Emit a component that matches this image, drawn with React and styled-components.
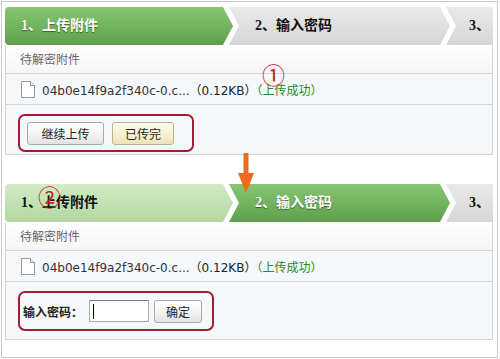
import React from "react";
import styled, { createGlobalStyle } from "styled-components";

const GlobalStyle = createGlobalStyle`
  html, body {
    margin: 0;
    padding: 0;
    background: #fff;
  }
  body {
    font-family: "Noto Sans CJK SC", "DejaVu Sans", sans-serif;
  }
`;

const stepColors = {
  active: {
    bg: "linear-gradient(to bottom, #88c574 0%, #72b45f 50%, #5f9f4c 100%)",
    color: "#fff",
    shadow: "0 1px 1px rgba(0, 0, 0, 0.45)",
  },
  done: {
    bg: "linear-gradient(to bottom, #d3ebc6 0%, #c2e1b2 50%, #b2d79f 100%)",
    color: "#111",
    shadow: "none",
  },
  idle: {
    bg: "linear-gradient(to bottom, #e9e9e9 0%, #dedede 60%, #d6d6d6 100%)",
    color: "#111",
    shadow: "none",
  },
};

const shapes = {
  first: "polygon(0 0, calc(100% - 10px) 0, 100% 50%, calc(100% - 10px) 100%, 0 100%)",
  middle:
    "polygon(0 0, calc(100% - 10px) 0, 100% 50%, calc(100% - 10px) 100%, 0 100%, 10px 50%)",
  last: "polygon(0 0, 100% 0, 100% 100%, 0 100%, 10px 50%)",
};

const Frame = styled.div`
  position: relative;
  box-sizing: border-box;
  width: 497px;
  height: 357px;
  margin: 1px 0 0 1px;
  border: 1px solid #c9c9c9;
  padding: 5px 4px 0 3px;
  background: #fff;
`;

const Panel = styled.div`
  width: 488px;
  margin-bottom: ${(p) => p.$gap || 0}px;
`;

const StepBar = styled.div`
  display: flex;
  height: 38px;
  background: #fff;
  overflow: hidden;
`;

const Step = styled.div`
  box-sizing: border-box;
  flex: ${(p) => (p.$width ? `0 0 ${p.$width}px` : "1 1 auto")};
  margin-left: ${(p) => p.$offset || 0}px;
  padding-left: ${(p) => p.$pad}px;
  height: 38px;
  font: bold 14px/38px "Liberation Serif", "Noto Sans CJK SC", serif;
  white-space: nowrap;
  overflow: hidden;
  clip-path: ${(p) => shapes[p.$shape]};
  border-radius: ${(p) => (p.$shape === "first" ? "4px 0 0 4px" : "0")};
  background: ${(p) => stepColors[p.$state].bg};
  color: ${(p) => stepColors[p.$state].color};
  text-shadow: ${(p) => stepColors[p.$state].shadow};
`;

const Body = styled.div`
  border: 1px solid #d3d3d3;
  border-top: none;
  background: #f4f8fb;
`;

const HeaderRow = styled.div`
  box-sizing: border-box;
  height: 29px;
  padding-left: 14px;
  border-bottom: 1px solid #d3d3d3;
  background: linear-gradient(to bottom, #ffffff, #f5f5f5);
  color: #666;
  font: 12px/28px "Noto Sans CJK SC", sans-serif;
`;

const FileRow = styled.div`
  box-sizing: border-box;
  display: flex;
  align-items: center;
  gap: 7px;
  height: 31px;
  padding-left: 15px;
  border-bottom: 1px solid #d3d3d3;
  font: 12px "DejaVu Sans", "Noto Sans CJK SC", sans-serif;
  color: #333;
`;

const Size = styled.span`
  color: #222;
`;

const Status = styled.span`
  color: #228b22;
`;

const ActionArea = styled.div`
  padding: 9px 12px ${(p) => p.$bottom}px 12px;
`;

const RedBox = styled.div`
  box-sizing: border-box;
  display: flex;
  align-items: center;
  gap: ${(p) => p.$gap}px;
  width: ${(p) => p.$w}px;
  height: ${(p) => p.$h}px;
  padding-left: ${(p) => p.$pad}px;
  border: 2px solid #a21d33;
  border-radius: 7px;
`;

const buttonThemes = {
  plain: {
    bg: "linear-gradient(to bottom, #ffffff 0%, #f3f3f3 55%, #e2e2e2 100%)",
    border: "#a9a9a9",
  },
  warm: {
    bg: "linear-gradient(to bottom, #fffbee 0%, #f8efd2 55%, #efe2b8 100%)",
    border: "#bdb08a",
  },
};

const Button = styled.button`
  box-sizing: border-box;
  width: ${(p) => p.$w}px;
  height: 23px;
  padding: 0;
  border: 1px solid ${(p) => buttonThemes[p.$kind].border};
  border-radius: 3px;
  background: ${(p) => buttonThemes[p.$kind].bg};
  color: #222;
  font: 12px "Noto Sans CJK SC", sans-serif;
  cursor: pointer;
`;

const Label = styled.span`
  font: bold 12px "Noto Sans CJK SC", sans-serif;
  color: #222;
  margin-right: 1px;
`;

const InputBox = styled.div`
  box-sizing: border-box;
  display: flex;
  align-items: center;
  width: 60px;
  height: 22px;
  padding-left: 3px;
  border: 1px solid #a7adb4;
  border-top-color: #7d7d7d;
  background: #fff;
`;

const Caret = styled.span`
  width: 1px;
  height: 15px;
  background: #000;
`;

const Mark = styled.span`
  position: absolute;
  left: ${(p) => p.$x}px;
  top: ${(p) => p.$y}px;
  font: 23px/1 "Noto Sans CJK SC", sans-serif;
  color: #c52228;
  pointer-events: none;
`;

const DownArrow = styled.svg`
  position: absolute;
  left: 236px;
  top: 151px;
`;

const FileIcon = () => (
  <svg width="14" height="17" viewBox="0 0 14 17">
    <path d="M0.5 0.5 H9.5 L13.5 4.5 V16.5 H0.5 Z" fill="#fff" stroke="#9a9a9a" />
    <path d="M9.5 0.5 V4.5 H13.5" fill="#eee" stroke="#9a9a9a" />
  </svg>
);

const Steps = ({ states }) => (
  <StepBar>
    <Step $shape="first" $width={228} $pad={16} $state={states[0]}>
      1、上传附件
    </Step>
    <Step $shape="middle" $width={221} $offset={-4} $pad={26} $state={states[1]}>
      2、输入密码
    </Step>
    <Step $shape="last" $offset={-4} $pad={23} $state={states[2]}>
      3、
    </Step>
  </StepBar>
);

const FileInfo = () => (
  <>
    <HeaderRow>待解密附件</HeaderRow>
    <FileRow>
      <FileIcon />
      <span>
        04b0e14f9a2f340c-0.c...<Size>（0.12KB）</Size>
        <Status>（上传成功）</Status>
      </span>
    </FileRow>
  </>
);

export default function App() {
  return (
    <>
      <GlobalStyle />
      <Frame>
        <Panel $gap={29}>
          <Steps states={["active", "idle", "idle"]} />
          <Body>
            <FileInfo />
            <ActionArea $bottom={2}>
              <RedBox $w={176} $h={38} $pad={7} $gap={8}>
                <Button $kind="plain" $w={77}>
                  继续上传
                </Button>
                <Button $kind="warm" $w={62}>
                  已传完
                </Button>
              </RedBox>
            </ActionArea>
          </Body>
        </Panel>

        <Panel>
          <Steps states={["done", "active", "idle"]} />
          <Body>
            <FileInfo />
            <ActionArea $bottom={8}>
              <RedBox $w={196} $h={40} $pad={3} $gap={5}>
                <Label>输入密码：</Label>
                <InputBox>
                  <Caret />
                </InputBox>
                <Button $kind="plain" $w={48}>
                  确定
                </Button>
              </RedBox>
            </ActionArea>
          </Body>
        </Panel>

        <Mark $x={260} $y={61}>①</Mark>
        <Mark $x={36} $y={183}>②</Mark>
        <DownArrow width="16" height="40" viewBox="0 0 16 40">
          <rect x="5.5" y="0" width="5" height="21" fill="#f06a1c" />
          <polygon points="0,20 16,20 8,40" fill="#f06a1c" />
        </DownArrow>
      </Frame>
    </>
  );
}
